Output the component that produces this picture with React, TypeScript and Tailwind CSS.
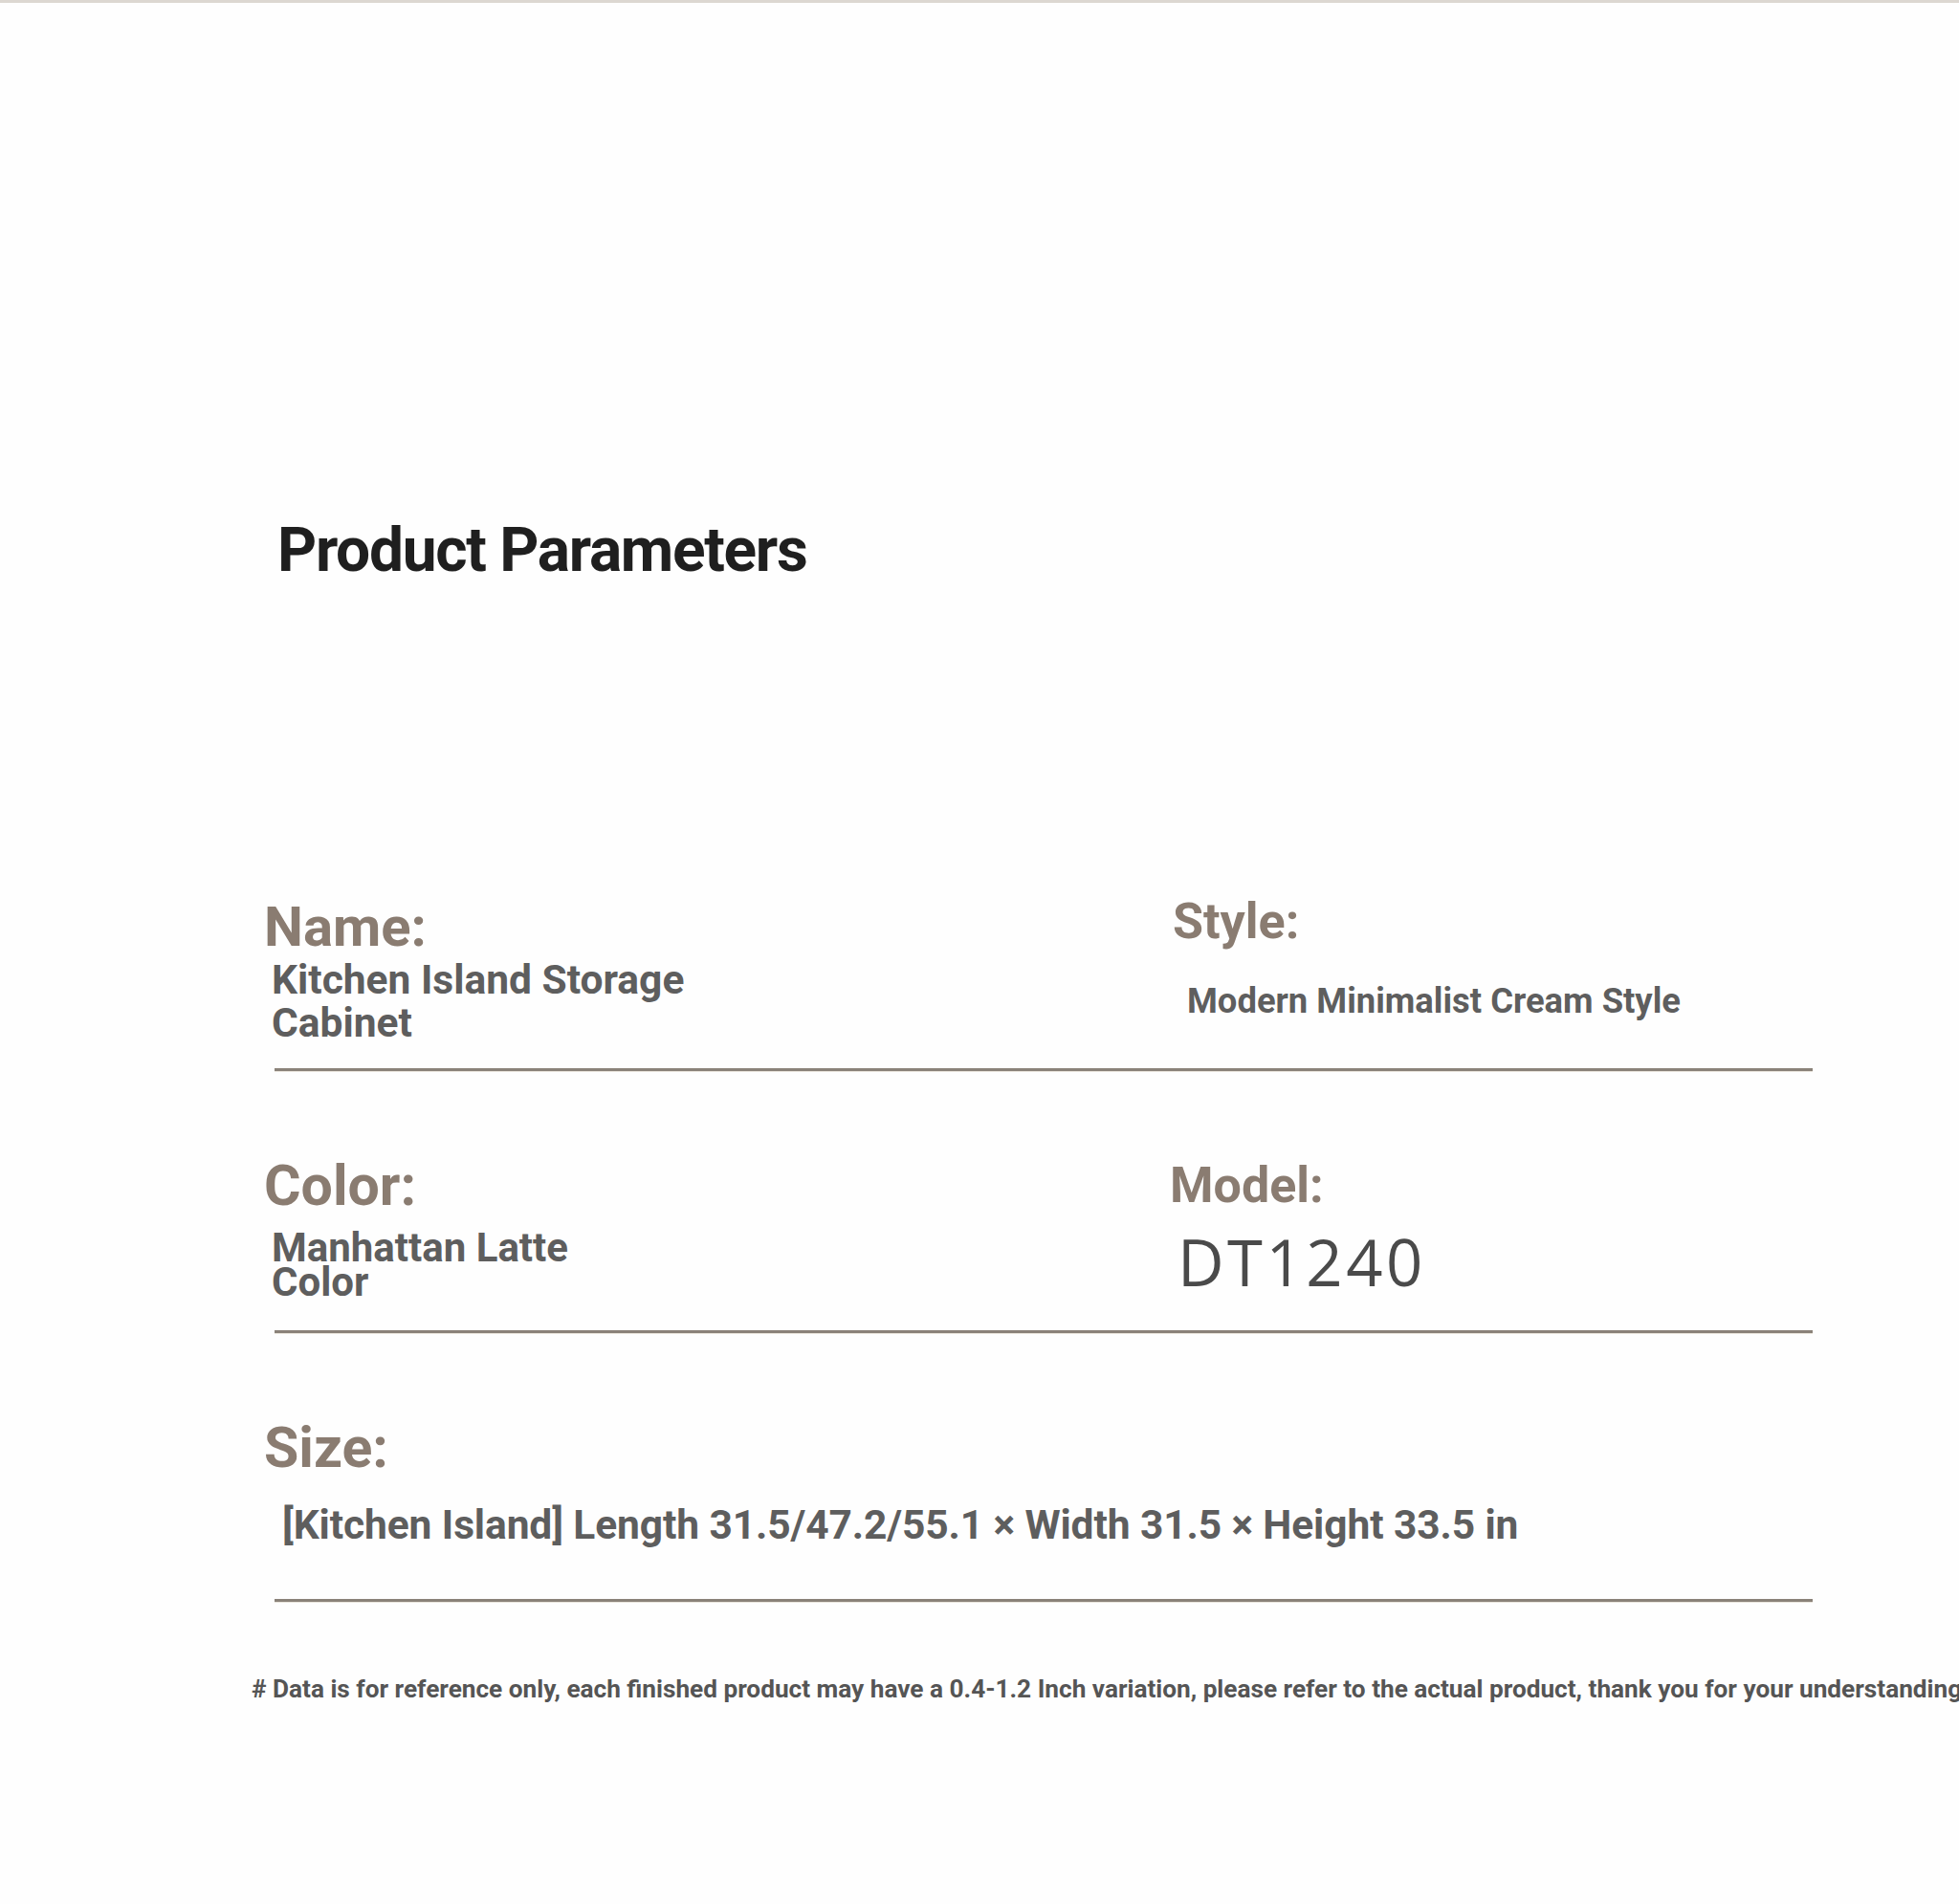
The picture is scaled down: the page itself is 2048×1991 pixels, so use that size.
const label = "block leading-none font-bold text-[#8a7c71]";
const value = "block font-bold text-[#5e5e5e]";

function Divider() {
  return <div className="ml-[11px] h-[3px] w-[1608px] bg-[#8a8279] shadow-[0_1px_0_#e9e4dc]" />;
}

export default function App() {
  return (
    <div className="h-[1991px] w-[2048px] overflow-hidden bg-[#fefefe] font-['Roboto',sans-serif]">
      <div className="h-[3px] bg-[#dcd7d1]" />

      {/* heading */}
      <div className="pl-[290px] pt-[541px]">
        <h1 className="text-[64px] leading-none font-bold tracking-[-1.3px] text-[#1f1f1f]">Product Parameters</h1>
      </div>

      <div className="mt-[328px] pl-[276px]">
        {/* name / style */}
        <div className="grid h-[181px] grid-cols-[950px_1fr]">
          <div className="pt-[4px]">
            <span className={`${label} text-[58px]`}>Name:</span>
            <span className={`${value} mt-[4px] ml-[8px] text-[42.5px] leading-[45px]`}>
              Kitchen Island Storage
              <br />
              Cabinet
            </span>
          </div>
          <div className="pt-[2px]">
            <span className={`${label} text-[52px]`}>Style:</span>
            <span className={`${value} mt-[39px] ml-[15px] text-[36.4px] leading-none`}>
              Modern Minimalist Cream Style
            </span>
          </div>
        </div>
        <Divider />

        {/* color / model */}
        <div className="grid h-[271px] grid-cols-[947px_1fr]">
          <div className="pt-[90px]">
            <span className={`${label} text-[59px]`}>Color:</span>
            <span className={`${value} mt-[18px] ml-[8px] text-[42px] leading-[36px]`}>
              Manhattan Latte
              <br />
              Color
            </span>
          </div>
          <div className="pt-[94px]">
            <span className={`${label} text-[52px]`}>Model:</span>
            <span className="mt-[20px] ml-[8px] block font-['Open_Sans',sans-serif] text-[67px] leading-none tracking-[3.5px] text-[#4a4a4a]">
              DT1240
            </span>
          </div>
        </div>
        <Divider />

        {/* size */}
        <div className="h-[278px] pt-[90px]">
          <span className={`${label} text-[59px]`}>Size:</span>
          <span className={`${value} mt-[31px] ml-[19px] text-[42.5px] leading-none tracking-[-0.1px]`}>
            [Kitchen Island] Length 31.5/47.2/55.1 × Width 31.5 × Height 33.5 in
          </span>
        </div>
        <Divider />
      </div>

      <p className="mt-[78px] pl-[263px] text-[26.2px] leading-none font-bold whitespace-nowrap text-[#555555]">
        # Data is for reference only, each finished product may have a 0.4-1.2 Inch variation, please refer to the
        actual product, thank you for your understanding.
      </p>
    </div>
  );
}
